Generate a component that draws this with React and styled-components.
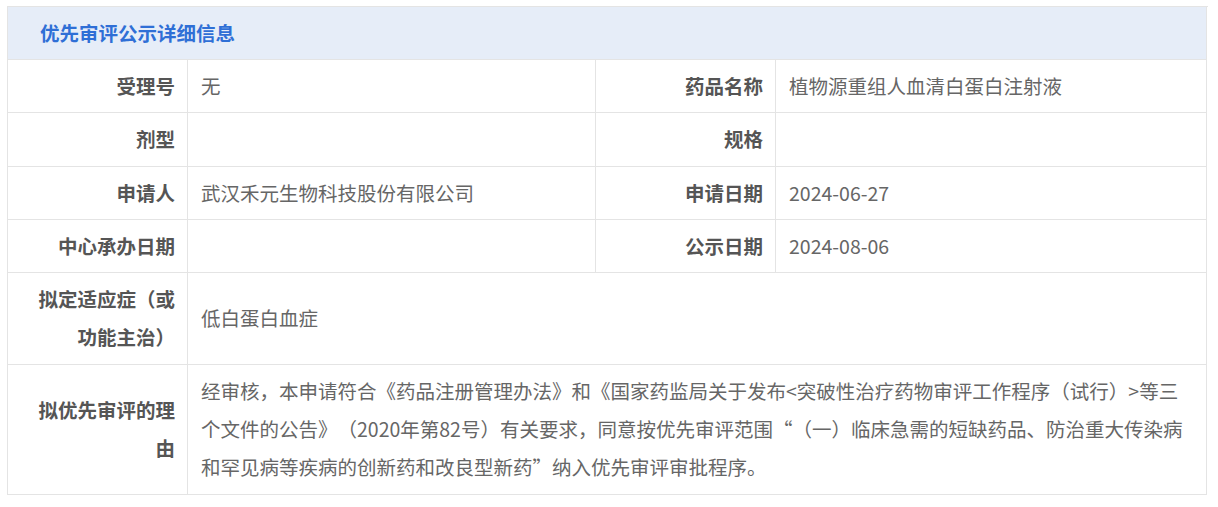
import React from 'react';
import styled, { createGlobalStyle } from 'styled-components';

const GlobalStyle = createGlobalStyle`
  body {
    margin: 0;
    background: #fff;
    font-family: "Noto Sans CJK SC", "Noto Sans", sans-serif;
  }
`;

const Page = styled.div`
  padding: 6px 7px;
`;

const Table = styled.div`
  width: 1200px;
  display: grid;
  grid-template-columns: 180px 408px 180px 431px;
  border-top: 1px solid #e4e4e4;
  border-left: 1px solid #e4e4e4;
  font-size: 19.5px;
  text-spacing-trim: space-all;
`;

const Title = styled.div`
  grid-column: 1 / -1;
  background: #e6edf8;
  color: #2f6fd6;
  font-weight: 700;
  line-height: 38px;
  padding: 7px 32px 7px;
  border-right: 1px solid #e4e4e4;
  border-bottom: 1px solid #e4e4e4;
`;

const Cell = styled.div`
  display: flex;
  align-items: center;
  line-height: 38.3px;
  padding: 7px 12px;
  border-right: 1px solid #e4e4e4;
  border-bottom: 1px solid #e4e4e4;
  grid-column: ${(p) => (p.$wide ? '2 / -1' : 'auto')};
`;

const Label = styled(Cell)`
  justify-content: flex-end;
  text-align: right;
  font-weight: 700;
  color: #555;
`;

const Value = styled(Cell)`
  color: #666;
  padding-left: 13px;
`;

const rows = [
  ['受理号', '无', '药品名称', '植物源重组人血清白蛋白注射液'],
  ['剂型', '', '规格', ''],
  ['申请人', '武汉禾元生物科技股份有限公司', '申请日期', '2024-06-27'],
  ['中心承办日期', '', '公示日期', '2024-08-06'],
];

export default function App() {
  return (
    <Page>
      <GlobalStyle />
      <Table>
        <Title>优先审评公示详细信息</Title>
        {rows.map((r) => (
          <React.Fragment key={r[0]}>
            <Label>{r[0]}</Label>
            <Value>{r[1]}</Value>
            <Label>{r[2]}</Label>
            <Value>{r[3]}</Value>
          </React.Fragment>
        ))}
        <Label>拟定适应症（或功能主治）</Label>
        <Value $wide>低白蛋白血症</Value>
        <Label>拟优先审评的理由</Label>
        <Value $wide>
          经审核，本申请符合《药品注册管理办法》和《国家药监局关于发布&lt;突破性治疗药物审评工作程序（试行）&gt;等三个文件的公告》（2020年第82号）有关要求，同意按优先审评范围“（一）临床急需的短缺药品、防治重大传染病和罕见病等疾病的创新药和改良型新药”纳入优先审评审批程序。
        </Value>
      </Table>
    </Page>
  );
}
